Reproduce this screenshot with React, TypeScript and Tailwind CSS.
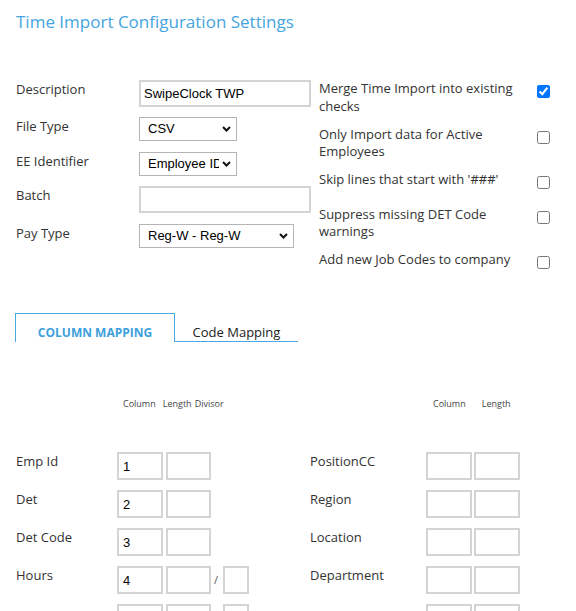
import React from "react";

type Opt = { label: string; checked?: boolean };

const options: Opt[] = [
  { label: "Merge Time Import into existing checks", checked: true },
  { label: "Only Import data for Active Employees" },
  { label: "Skip lines that start with '###'" },
  { label: "Suppress missing DET Code warnings" },
  { label: "Add new Job Codes to company" },
];

const leftRows = [
  { label: "Emp Id", col: "1", divisor: false },
  { label: "Det", col: "2", divisor: false },
  { label: "Det Code", col: "3", divisor: false },
  { label: "Hours", col: "4", divisor: true },
  { label: "", col: "", divisor: true },
];

const rightRows = ["PositionCC", "Region", "Location", "Department", ""];

function Chevron() {
  return (
    <svg width="9" height="6" viewBox="0 0 9 6" className="shrink-0">
      <path d="M1 1l3.5 3.5L8 1" fill="none" stroke="#111" strokeWidth="2" />
    </svg>
  );
}

function FakeSelect({ value, w, text }: { value: string; w: string; text: string }) {
  return (
    <div className={`${w} h-[24px] border border-[#b5b5b5] bg-white flex items-center pl-[8px] pr-[5px] font-['Liberation_Sans',Arial,sans-serif] text-[13px] text-black`}>
      <span className={`${text} overflow-hidden whitespace-nowrap`}>{value}</span>
      <span className="ml-auto">
        <Chevron />
      </span>
    </div>
  );
}

function Box({ value, w }: { value?: string; w: string }) {
  return (
    <input
      readOnly
      value={value ?? ""}
      className={`${w} h-[28px] border-2 border-[#d4d4d4] bg-white px-[4px] font-['Liberation_Sans',Arial,sans-serif] text-[13px] text-black outline-none`}
    />
  );
}

export default function App() {
  return (
    <div className="min-h-screen bg-white font-['Open_Sans',sans-serif] text-[13px] text-[#333]">
      <h1 className="pt-[10px] pl-[16px] text-[17px] leading-[24px] text-[#45a5de]">
        Time Import Configuration Settings
      </h1>

      {/* top form */}
      <div className="flex pl-[16px] mt-[46px]">
        <div className="w-[303px] flex flex-col">
          <div className="flex">
            <div className="w-[123px] leading-[18px]">Description</div>
            <input
              readOnly
              value="SwipeClock TWP"
              className="w-[172px] h-[27px] border-2 border-[#d4d4d4] px-[3px] font-['Liberation_Sans',Arial,sans-serif] text-[13px] text-black outline-none"
            />
          </div>
          <div className="flex mt-[10px]">
            <div className="w-[123px] leading-[18px]">File Type</div>
            <FakeSelect value="CSV" w="w-[98px]" text="w-[70px]" />
          </div>
          <div className="flex mt-[11px]">
            <div className="w-[123px] leading-[18px]">EE Identifier</div>
            <FakeSelect value="Employee ID" w="w-[98px]" text="w-[71px]" />
          </div>
          <div className="flex mt-[10px]">
            <div className="w-[123px] leading-[18px]">Batch</div>
            <input
              readOnly
              value=""
              className="w-[172px] h-[27px] border-2 border-[#d4d4d4] px-[3px] outline-none"
            />
          </div>
          <div className="flex mt-[11px]">
            <div className="w-[123px] leading-[18px]">Pay Type</div>
            <FakeSelect value="Reg-W - Reg-W" w="w-[155px]" text="w-[120px]" />
          </div>
        </div>

        <div className="flex flex-col gap-[10.5px]">
          {options.map((o) => (
            <div key={o.label} className="flex min-h-[24px]">
              <div className="w-[210px] leading-[17.5px]">{o.label}</div>
              <input
                type="checkbox"
                readOnly
                checked={!!o.checked}
                className="ml-[8px] mt-[5px] m-0 w-[13px] h-[13px]"
              />
            </div>
          ))}
        </div>
      </div>

      {/* tabs */}
      <div className="flex ml-[15px] mt-[38px]">
        <div className="w-[160px] h-[29px] border border-b-0 border-[#4aa8e0] flex justify-center pt-[10px] leading-[18px] text-[12px] font-bold text-[#3d9fdb]">
          COLUMN MAPPING
        </div>
        <div className="w-[123px] h-[29px] border-b border-[#4aa8e0] flex justify-center pt-[10px] leading-[18px] text-[13px] text-[#222]">
          Code Mapping
        </div>
      </div>

      {/* mapping headers */}
      <div className="flex pl-[16px] mt-[56px] text-[9px] leading-[12px] text-[#444]">
        <div className="w-[294px] flex">
          <span className="ml-[107px]">Column</span>
          <span className="ml-[7px]">Length</span>
          <span className="ml-[3px]">Divisor</span>
        </div>
        <div className="flex">
          <span className="ml-[123px]">Column</span>
          <span className="ml-[16px]">Length</span>
        </div>
      </div>

      {/* mapping rows */}
      <div className="flex flex-col gap-[10px] pl-[16px] mt-[42px]">
        {leftRows.map((r, i) => (
          <div key={i} className="flex">
            <div className="w-[294px] flex">
              <div className="w-[101px] leading-[18px]">{r.label}</div>
              <div className="flex gap-[3px]">
                <Box value={r.col} w="w-[46px]" />
                <Box w="w-[45px]" />
              </div>
              {r.divisor && (
                <div className="flex items-center">
                  <span className="ml-[3px] mr-[5px] text-[11px] text-[#555]">/</span>
                  <Box w="w-[26px]" />
                </div>
              )}
            </div>
            <div className="flex">
              <div className="w-[116px] leading-[18px]">{rightRows[i]}</div>
              <div className="flex gap-[2px]">
                <Box w="w-[46px]" />
                <Box w="w-[46px]" />
              </div>
            </div>
          </div>
        ))}
      </div>
    </div>
  );
}
